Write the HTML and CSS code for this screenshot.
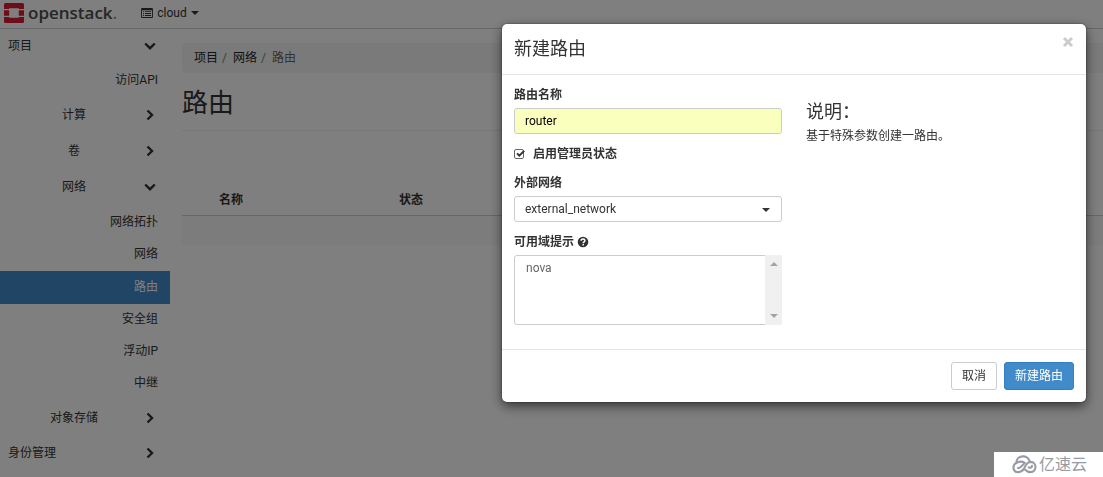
FILE: index.html
```html
<!DOCTYPE html>
<html lang="zh-CN">
<head>
<meta charset="utf-8">
<meta name="viewport" content="width=device-width, initial-scale=1">
<title>路由 - OpenStack Dashboard</title>
<link rel="stylesheet" href="styles.css">
</head>
<body>
<svg class="sprite" aria-hidden="true">
  <symbol id="chevron-right" viewBox="0 0 12 12"><path d="M3.5 1.5 8 6l-4.5 4.5" fill="none" stroke="currentColor" stroke-width="2.4"/></symbol>
  <symbol id="chevron-down" viewBox="0 0 12 12"><path d="M1.2 3.5 6 8.200l4.800-4.700" fill="none" stroke="currentColor" stroke-width="2.400"/></symbol>
  <symbol id="caret" viewBox="0 0 8 4"><path d="M0 0h8L4 4z" fill="currentColor"/></symbol>
</svg>

<header class="topbar">
  <a class="brand" href="#">
    <svg class="brand-mark" viewBox="0 0 20 20" aria-hidden="true">
      <path fill="#da1a32" d="M1.500 0h17A1.500 1.500 0 0 1 20 1.500V6h-5.200V5.200H5.200V6H0V1.500A1.500 1.500 0 0 1 1.500 0zM0 14h5.200v.8h9.600V14H20v4.500a1.500 1.500 0 0 1-1.500 1.500h-17A1.500 1.500 0 0 1 0 18.500zM0 7.200h5.200v5.600H0zM14.800 7.200H20v5.600h-5.200z"/>
    </svg>
    <span class="brand-name">openstack<span class="brand-dot">.</span></span>
  </a>
  <button class="project-switch" type="button">
    <svg class="list-icon" viewBox="0 0 13 11" aria-hidden="true">
      <path fill="currentColor" fill-rule="evenodd" d="M1 0h11a1 1 0 0 1 1 1v9a1 1 0 0 1-1 1H1a1 1 0 0 1-1-1V1a1 1 0 0 1 1-1zM1 2.500V10h11V2.500zM2 3.500h1.200v1H2zM4.200 3.500H11v1H4.200zM2 5.600h1.200v1H2zM4.200 5.600H11v1H4.200zM2 7.700h1.200v1H2zM4.200 7.700H11v1H4.200z"/>
    </svg>
    cloud
    <svg class="caret" aria-hidden="true"><use href="#caret"/></svg>
  </button>
</header>

<div class="page">
  <nav class="sidebar" aria-label="导航">
    <a class="nav-top" href="#">项目<svg class="chevron" aria-hidden="true"><use href="#chevron-down"/></svg></a>
    <div class="nav-list">
      <a class="nav-leaf" href="#">访问API</a>
    </div>
    <a class="nav-group" href="#"><span class="nav-label">计算</span><svg class="chevron" aria-hidden="true"><use href="#chevron-right"/></svg></a>
    <a class="nav-group" href="#"><span class="nav-label">卷</span><svg class="chevron" aria-hidden="true"><use href="#chevron-right"/></svg></a>
    <a class="nav-group" href="#"><span class="nav-label">网络</span><svg class="chevron" aria-hidden="true"><use href="#chevron-down"/></svg></a>
    <div class="nav-list">
      <a class="nav-leaf" href="#">网络拓扑</a>
      <a class="nav-leaf" href="#">网络</a>
      <a class="nav-leaf active" href="#" aria-current="page">路由</a>
      <a class="nav-leaf" href="#">安全组</a>
      <a class="nav-leaf" href="#">浮动IP</a>
      <a class="nav-leaf" href="#">中继</a>
    </div>
    <a class="nav-group" href="#"><span class="nav-label">对象存储</span><svg class="chevron" aria-hidden="true"><use href="#chevron-right"/></svg></a>
    <a class="nav-top" href="#">身份管理<svg class="chevron" aria-hidden="true"><use href="#chevron-right"/></svg></a>
  </nav>

  <main class="content">
    <ol class="breadcrumb">
      <li><a href="#">项目</a></li>
      <li><a href="#">网络</a></li>
      <li>路由</li>
    </ol>
    <h1 class="page-title">路由</h1>
    <table class="routers">
      <thead>
        <tr><th class="col-check"></th><th class="col-name">名称</th><th>状态</th></tr>
      </thead>
      <tbody>
        <tr><td colspan="3"></td></tr>
      </tbody>
    </table>
  </main>
</div>

<div class="backdrop">
  <form class="modal" role="dialog" aria-labelledby="modal-title">
    <div class="modal-header">
      <h2 class="modal-title" id="modal-title">新建路由</h2>
      <button class="close" type="button" aria-label="关闭">
        <svg viewBox="0 0 12 12" aria-hidden="true"><path d="M2 2l8 8M10 2l-8 8" fill="none" stroke="currentColor" stroke-width="3"/></svg>
      </button>
    </div>
    <div class="modal-body">
      <div class="fields">
        <div class="field">
          <label for="name">路由名称</label>
          <input class="control filled" id="name" type="text" value="router">
        </div>
        <div class="check-field">
          <span class="check-box">
            <input id="admin" type="checkbox" checked>
            <svg viewBox="0 0 12 12" aria-hidden="true"><path d="M2.500 5.200 5.200 8 11 2.200" fill="none" stroke="currentColor" stroke-width="2.400"/></svg>
          </span>
          <label for="admin">启用管理员状态</label>
        </div>
        <div class="field">
          <label for="network">外部网络</label>
          <div class="select-wrap">
            <select class="control" id="network"><option>external_network</option></select>
            <svg class="caret" aria-hidden="true"><use href="#caret"/></svg>
          </div>
        </div>
        <div class="field">
          <label for="zones">可用域提示
            <svg class="help" viewBox="0 0 12 12" aria-hidden="true"><circle cx="6" cy="6" r="5.300" fill="currentColor"/><path d="M4.200 4.700C4.200 2.500 7.900 2.600 7.900 4.600 7.900 5.900 6.200 5.900 6.200 7.300M6.200 8.100v1.500" fill="none" stroke="#fff" stroke-width="1.500"/></svg>
          </label>
          <div class="list-wrap">
            <select class="zones" id="zones" multiple size="4"><option>nova</option></select>
            <div class="rail" aria-hidden="true">
              <svg class="caret up"><use href="#caret"/></svg>
              <svg class="caret"><use href="#caret"/></svg>
            </div>
          </div>
        </div>
      </div>
      <div class="description">
        <h3>说明：</h3>
        <p>基于特殊参数创建一路由。</p>
      </div>
    </div>
    <div class="modal-footer">
      <button class="btn" type="button">取消</button>
      <button class="btn primary" type="submit">新建路由</button>
    </div>
  </form>
</div>

<div class="watermark">
  <svg viewBox="0 0 26 19" aria-hidden="true">
    <g fill="none" stroke="currentColor" stroke-width="2.200" stroke-linecap="round" stroke-linejoin="round">
      <path d="M4.600 7.600C4.500-.6 16.500-1 18.200 5.800"/>
      <path d="M13.200 7.800C10.500 6 7.800 6.400 5.600 7.300-.4 9.500.4 17.400 6.500 17.400c3 0 5-1.700 6.300-4.200 1.500-3.300 2.700-6.300 6.400-6.400 6.900 0 7 10.600 0 10.600-2.500 0-4-1-5.400-2.500"/>
      <path d="M6.200 13.200c2.800.6 3.600-2 6.200-4.600M17.300 12.400c1.600 1 3.500.2 3.500-1.600"/>
    </g>
  </svg>
  亿速云
</div>
</body>
</html>
```
FILE: styles.css
```css
* {
  box-sizing: border-box;
}

body {
  margin: 0;
  min-height: 100vh;
  overflow: hidden;
  background: #fff;
  color: #333;
  font-family: Roboto, "Noto Sans CJK SC", sans-serif;
  font-size: 12px;
  line-height: 18px;
}

a {
  color: inherit;
  text-decoration: none;
}

button,
input,
select {
  font: inherit;
  color: inherit;
}

h1,
h2,
h3,
p,
ol {
  margin: 0;
  padding: 0;
  font-weight: 400;
}

.sprite {
  position: absolute;
  width: 0;
  height: 0;
}

.caret {
  width: 8px;
  height: 4px;
}

/* Top bar */
.topbar {
  display: flex;
  align-items: center;
  gap: 24px;
  height: 29px;
  padding: 0 4px 3px;
  border-bottom: 1px solid #ccc;
}

.brand {
  display: flex;
  align-items: center;
  gap: 4px;
}

.brand-mark {
  width: 20px;
  height: 20px;
}

.brand-name {
  color: #4d4d4d;
  font-family: "Open Sans", sans-serif;
  font-size: 17px;
  font-weight: 600;
  line-height: 22px;
}

.brand-dot {
  color: #999;
}

.project-switch {
  display: flex;
  align-items: center;
  gap: 4px;
  padding: 0;
  border: 0;
  background: none;
}

.list-icon {
  width: 12px;
  height: 10px;
}

/* Page */
.page {
  display: flex;
}

.sidebar {
  flex: 0 0 170px;
}

.sidebar a {
  display: flex;
  align-items: center;
}

.nav-top {
  height: 34px;
  justify-content: space-between;
  padding: 0 14px 0 8px;
}

.nav-list {
  padding-top: 2px;
}

.nav-leaf {
  height: 32px;
  justify-content: flex-end;
  padding: 0 12px 2px;
}

.nav-group {
  height: 36px;
  padding-right: 14px;
}

.nav-label {
  flex: 1;
  padding-left: 4px;
  text-align: center;
}

.nav-leaf.active {
  height: 33px;
  background: #428bca;
  color: #fff;
}

.chevron {
  width: 12px;
  height: 12px;
}

.content {
  flex: 1;
  padding: 14px 0 0 12px;
}

.breadcrumb {
  display: flex;
  padding: 6px 12px;
  border-radius: 4px 0 0 4px;
  background: #f5f5f5;
  list-style: none;
  color: #666;
}

.breadcrumb a {
  color: #222;
}

.breadcrumb li + li::before {
  content: "/";
  padding: 0 6px 0 4px;
  color: #777;
}

.page-title {
  padding: 12px 0 9px;
  border-bottom: 1px solid #eee;
  font-size: 26px;
  line-height: 36px;
}

.routers {
  width: 100%;
  margin-top: 54px;
  border-collapse: collapse;
}

.routers th {
  height: 30px;
  padding: 0;
  border-bottom: 1px solid #ccc;
  text-align: left;
}

.routers td {
  height: 30px;
  padding: 0;
  background: #f9f9f9;
}

.col-check {
  width: 37px;
}

.col-name {
  width: 180px;
}

/* Dialog */
.backdrop {
  position: fixed;
  inset: 0;
  display: flex;
  align-items: flex-start;
  justify-content: flex-end;
  padding: 24px 17px;
  background: rgba(0, 0, 0, 0.5);
}

.modal {
  width: 584px;
  max-width: 100%;
  border-radius: 5px;
  background: #fff;
  box-shadow: 0 4px 12px rgba(0, 0, 0, 0.6), 0 0 2px rgba(0, 0, 0, 0.5);
}

.modal-header {
  display: flex;
  align-items: flex-start;
  justify-content: space-between;
  padding: 12px;
  border-bottom: 1px solid #e5e5e5;
}

.modal-title {
  font-size: 18px;
  line-height: 26px;
}

.close {
  display: flex;
  padding: 0;
  border: 0;
  background: none;
  color: #ccc;
}

.close svg {
  width: 12px;
  height: 12px;
}

.modal-body {
  display: grid;
  grid-template-columns: 1fr 1fr;
  gap: 24px;
  padding: 11px 12px 24px;
}

.fields {
  display: flex;
  flex-direction: column;
  gap: 10px;
}

.field label {
  display: flex;
  align-items: center;
  gap: 3px;
  margin-bottom: 4px;
}

.fields label {
  font-weight: 700;
}

.control {
  display: block;
  width: 100%;
  height: 26px;
  padding: 0 10px;
  border: 1px solid #ccc;
  border-radius: 3px;
  background: #fff;
  appearance: none;
}

.control.filled {
  background: #faffbd;
  color: #000;
}

.check-field {
  display: flex;
  align-items: center;
  gap: 7px;
  padding: 1px 0;
}

.check-box {
  position: relative;
  display: flex;
  width: 12px;
}

.check-box input {
  width: 10px;
  height: 10px;
  margin: 0;
  border: 1px solid #666;
  border-radius: 2px;
  appearance: none;
}

.check-box svg {
  position: absolute;
  inset: 0;
  width: 12px;
  height: 10px;
  pointer-events: none;
}

.select-wrap,
.list-wrap {
  position: relative;
}

.select-wrap {
  padding-bottom: 1px;
}

.select-wrap .caret {
  position: absolute;
  top: 12px;
  right: 12px;
  pointer-events: none;
}

.help {
  width: 12px;
  height: 12px;
}

.zones {
  display: block;
  width: 100%;
  height: 70px;
  padding: 5px 9px;
  border: 1px solid #ccc;
  border-radius: 3px;
  background: #fff;
  color: #666;
  overflow: hidden;
}

.rail {
  position: absolute;
  inset: 0 0 0 auto;
  display: flex;
  flex-direction: column;
  align-items: center;
  justify-content: space-between;
  width: 17px;
  padding: 7px 0;
  background: #f0f0f0;
  color: #a3a3a3;
}

.rail .up {
  transform: rotate(180deg);
}

.description {
  padding-top: 13px;
}

.description h3 {
  margin-bottom: 2px;
  font-size: 18px;
  line-height: 26px;
}

.modal-footer {
  display: flex;
  justify-content: flex-end;
  gap: 7px;
  padding: 12px;
  border-top: 1px solid #e5e5e5;
}

.btn {
  height: 28px;
  padding: 0 10px;
  border: 1px solid #ccc;
  border-radius: 3px;
  background: #fff;
}

.btn.primary {
  border-color: #357ebd;
  background: #428bca;
  color: #fff;
}

/* Site mark */
.watermark {
  position: fixed;
  right: 0;
  bottom: 0;
  display: flex;
  align-items: center;
  gap: 2px;
  padding: 0 16px 0 18px;
  background: #fff;
  color: #979ba3;
  font-size: 16px;
  line-height: 25px;
}

.watermark svg {
  width: 25px;
  height: 19px;
}
```
